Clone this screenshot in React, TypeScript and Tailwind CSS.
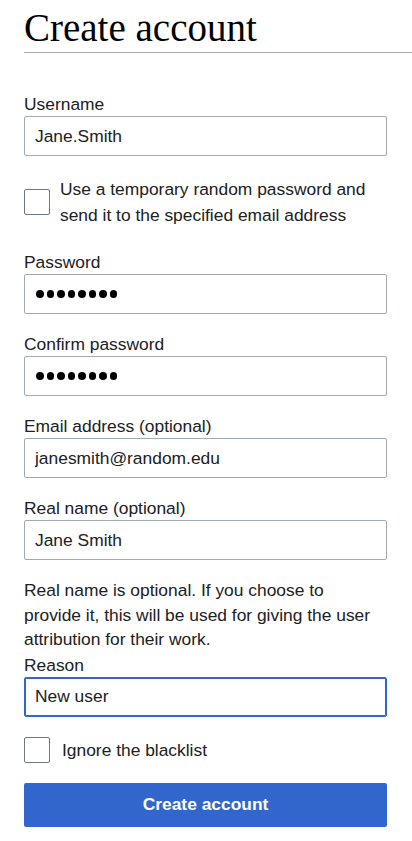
const fieldBase =
  "block w-full h-10 px-[10px] border rounded-[2px] bg-white text-[17.4px] text-[#202122] outline-none";
const fieldInput = `${fieldBase} border-[#a2a9b1]`;
const focusedInput = `${fieldBase} border-[#36c] shadow-[inset_0_0_0_1px_#36c]`;

function Label({ children }: { children: React.ReactNode }) {
  return <label className="block text-[17.4px] leading-5 mb-[2px]">{children}</label>;
}

function PasswordBox() {
  return (
    <div className="flex items-center h-10 pl-[11px] border border-[#a2a9b1] rounded-[2px] bg-white">
      <div className="flex gap-[3px]">
        {Array.from({ length: 8 }).map((_, i) => (
          <span key={i} className="block w-[7.5px] h-[7.5px] rounded-full bg-black" />
        ))}
      </div>
    </div>
  );
}

function Checkbox() {
  return (
    <input
      type="checkbox"
      readOnly
      className="appearance-none shrink-0 w-[26px] h-[26px] border border-[#72777d] rounded-[2px] bg-white"
    />
  );
}

export default function App() {
  return (
    <div className="min-h-screen bg-white text-[#202122] font-['Liberation_Sans',Arial,sans-serif]">
      <h1 className="ml-6 pt-[3px] leading-[49px] text-[39px] font-normal text-[#000] border-b border-[#a2a9b1] font-['Liberation_Serif','Times_New_Roman',serif]">
        Create account
      </h1>

      <form className="flex flex-col pl-6 pr-[25px] pt-[41px]">
        <div>
          <Label>Username</Label>
          <input className={fieldInput} readOnly value="Jane.Smith" />
        </div>

        <div className="mt-5 flex items-center">
          <Checkbox />
          <span className="pl-[10px] text-[17.4px] leading-[26px]">
            Use a temporary random password and send it to the specified email address
          </span>
        </div>

        <div className="mt-6">
          <Label>Password</Label>
          <PasswordBox />
        </div>

        <div className="mt-5">
          <Label>Confirm password</Label>
          <PasswordBox />
        </div>

        <div className="mt-5">
          <Label>Email address (optional)</Label>
          <input className={fieldInput} readOnly value="janesmith@random.edu" />
        </div>

        <div className="mt-5">
          <Label>Real name (optional)</Label>
          <input className={fieldInput} readOnly value="Jane Smith" />
        </div>

        <p className="mt-[18px] pr-[6px] text-[17.4px] leading-[24.5px]">
          Real name is optional. If you choose to provide it, this will be used for giving the user
          attribution for their work.
        </p>

        <div className="mt-[3px]">
          <Label>Reason</Label>
          <input className={focusedInput} readOnly value="New user" />
        </div>

        <div className="mt-5 flex items-center">
          <Checkbox />
          <span className="pl-3 text-[17.4px] leading-5">Ignore the blacklist</span>
        </div>

        <button
          type="button"
          className="mt-5 h-11 w-full rounded-[2px] bg-[#36c] text-white text-[17.4px] font-bold"
        >
          Create account
        </button>
      </form>
    </div>
  );
}
